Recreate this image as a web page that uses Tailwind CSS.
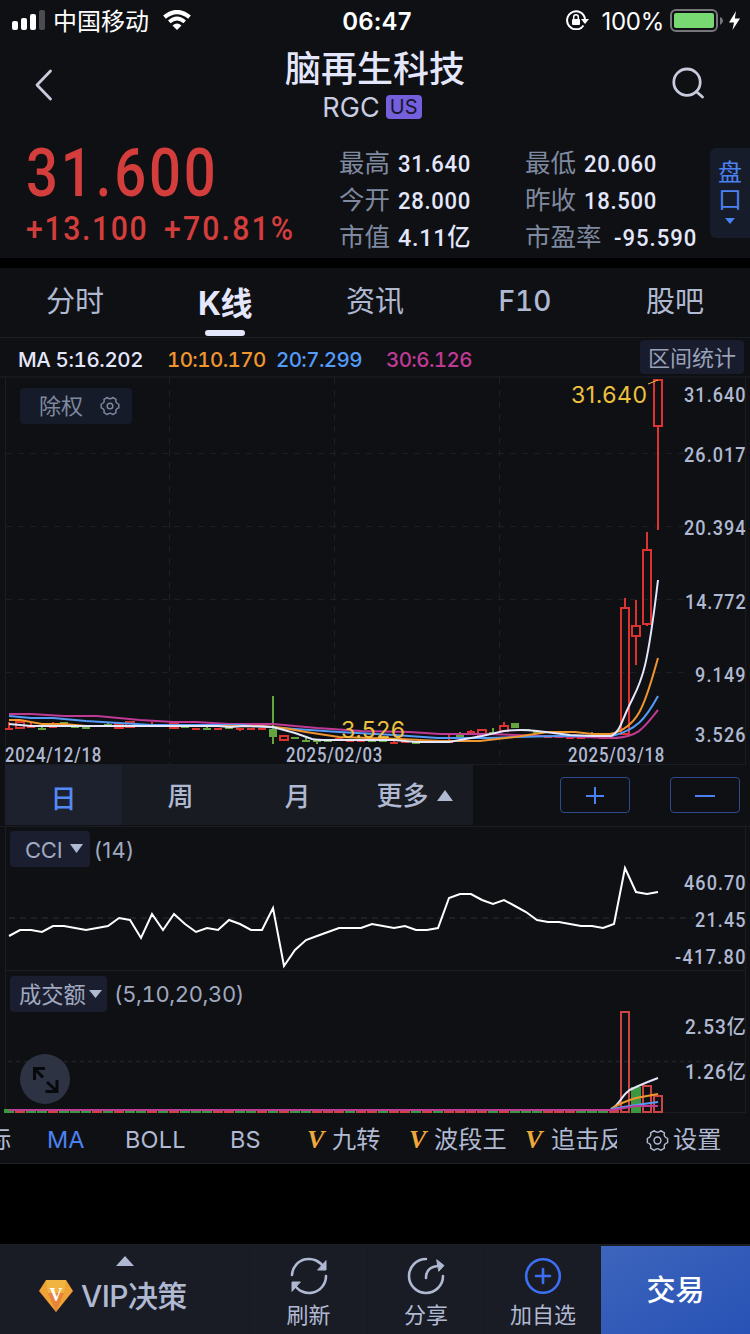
<!DOCTYPE html>
<html lang="zh-CN">
<head>
  <meta charset="UTF-8" />
  <meta name="viewport" content="width=device-width, initial-scale=1.0" />
  <title>脑再生科技 RGC</title>
  <script src="https://cdn.jsdelivr.net/npm/@tailwindcss/browser@4"></script>
</head>
<body class="w-[750px] h-[1334px] overflow-hidden bg-black text-[#b0b9d2] [font-family:Inter,'Noto_Sans_CJK_SC',sans-serif] leading-none whitespace-nowrap">
  <!-- Status bar -->
  <div class="h-10 bg-[#0f1014] grid grid-cols-3 items-center pl-3 pr-2 text-white text-2xl leading-10">
    <div class="flex items-center">
      <svg class="w-[34px] h-5 mr-[7px]" viewBox="0 0 34 20">
        <rect x="0" y="11" width="6" height="9" rx="2" fill="#fff" />
        <rect x="9" y="8" width="6" height="12" rx="2" fill="#fff" />
        <rect x="18" y="4" width="6" height="16" rx="2" fill="#fff" />
        <rect x="27" y="0" width="6" height="20" rx="2" fill="#4c4c50" />
      </svg>
      <span class="pt-[2px] leading-[37px]">中国移动</span>
      <svg class="w-7 h-5 ml-[14px]" viewBox="0 0 28 20">
        <path d="M1.500 7.200Q14-3.200 26.500 7.200" fill="none" stroke="#fff" stroke-width="4.200" />
        <path d="M6.300 11.800Q14 5 21.700 11.800" fill="none" stroke="#fff" stroke-width="3.800" />
        <path d="M9.500 15.500Q14 11.600 18.500 15.500L14 20Z" fill="#fff" />
      </svg>
    </div>
    <div class="text-center font-semibold tracking-[0.2px] pt-[2px] leading-[37px]">06:47</div>
    <div class="flex items-center justify-end">
      <svg class="w-6 h-5 mr-3" viewBox="0 0 24 20">
        <path d="M17.500 15.500A9 9 0 1 1 19 9" fill="none" stroke="#fff" stroke-width="2" />
        <path d="M15 9H23L19 14Z" fill="#fff" />
        <rect x="6" y="9" width="8" height="6" rx="1" fill="#fff" />
        <path d="M7.700 9V7A2.300 2.300 0 0 1 12.300 7V9" fill="none" stroke="#fff" stroke-width="1.500" />
      </svg>
      <span class="tracking-[-0.3px] pt-[2px] leading-[37px]">100%</span>
      <svg class="w-[72px] h-6 ml-[6px] mt-px" viewBox="0 0 72 24">
        <rect x="1" y="1" width="46" height="21" rx="5" fill="none" stroke="#77777b" stroke-width="2" />
        <rect x="4" y="4" width="40" height="15" rx="2" fill="#78d872" />
        <path d="M50 8Q53 9 53 12Q53 14 50 16Z" fill="#77777b" />
        <path d="M66 2L59 13.500H64L62.500 21L70 9.500H64.800Z" fill="#fff" />
      </svg>
    </div>
  </div>

  <!-- Title -->
  <header class="h-[90px] bg-[#0f1014] flex justify-between pl-[34px] pr-[44px]">
    <svg class="w-[38px] h-8 mt-[29px]" viewBox="0 0 38 32"><path d="M16.500 2L3 16L16.500 30" fill="none" stroke="#c8cbdd" stroke-width="2.800" stroke-linecap="round" stroke-linejoin="round" /></svg>
    <div class="ml-2 text-center text-[#e4e7fb]">
      <h1 class="text-4xl font-medium leading-[50px] mt-1">脑再生科技</h1>
      <div class="flex justify-center items-center gap-[6px] h-[26px] -ml-[6px] text-[#c9cde2]">
        <span class="text-[27px]">RGC</span>
        <span class="w-9 h-6 rounded-sm bg-[#7460dd] text-[#17172c] text-[20px] leading-6">US</span>
      </div>
    </div>
    <svg class="w-9 h-9 mt-[26px]" viewBox="0 0 36 36"><g fill="none" stroke="#c8cbdd" stroke-width="2.800" stroke-linecap="round"><circle cx="17" cy="16.200" r="13.200" /><path d="M26.500 25.700L32.500 31" /></g></svg>
  </header>

  <!-- Quote -->
  <section class="h-32 bg-[#0f1014] flex [font-family:Roboto,'Noto_Sans_CJK_SC',sans-serif]">
    <div class="w-[339px] pl-[26px] text-[#d33e3c] font-medium">
      <div class="h-[80px] leading-[86px] text-[67px] tracking-[3.4px] origin-left scale-x-[0.84]">31.600</div>
      <div class="h-10 leading-9 text-[34px] flex gap-[16px]">
        <span class="w-[122px] tracking-[1.8px] origin-left scale-x-[0.89]">+13.100</span>
        <span class="tracking-[2.4px] origin-left scale-x-[0.89]">+70.81%</span>
      </div>
    </div>
    <div class="w-[186px] pt-[15px] text-[25.500px] leading-[37px] text-[#7f899f]">
      <div class="flex gap-2"><span>最高</span><b class="text-[24.500px] font-medium tracking-[0.8px] origin-left scale-x-[0.9] text-[#e4e7fb]">31.640</b></div>
      <div class="flex gap-2"><span>今开</span><b class="text-[24.500px] font-medium tracking-[0.8px] origin-left scale-x-[0.9] text-[#e4e7fb]">28.000</b></div>
      <div class="flex gap-2"><span>市值</span><b class="text-[24.500px] font-medium tracking-[0.8px] origin-left scale-x-[0.95] text-[#e4e7fb]">4.11亿</b></div>
    </div>
    <div class="w-[185px] pt-[15px] text-[25.500px] leading-[37px] text-[#7f899f]">
      <div class="flex gap-2"><span>最低</span><b class="text-[24.500px] font-medium tracking-[0.8px] origin-left scale-x-[0.9] text-[#e4e7fb]">20.060</b></div>
      <div class="flex gap-2"><span>昨收</span><b class="text-[24.500px] font-medium tracking-[0.8px] origin-left scale-x-[0.9] text-[#e4e7fb]">18.500</b></div>
      <div class="flex gap-3"><span>市盈率</span><b class="text-[24.500px] font-medium tracking-[1.1px] origin-left scale-x-[0.9] text-[#e4e7fb]">-95.590</b></div>
    </div>
    <div class="w-10 h-[90px] mt-[18px] pt-3 rounded-l-md bg-[#161c29] text-[#4b82f2] text-2xl leading-[27px] flex flex-col items-center">
      <span>盘</span><span>口</span>
      <svg class="w-[10px] h-[6px] mt-1" viewBox="0 0 10 6"><path d="M0 0H10L5 6Z" fill="#4b82f2" /></svg>
    </div>
  </section>

  <!-- Tabs -->
  <nav class="mt-[10px] h-[70px] bg-[#0f1014] border-b border-[#1a1d22] grid grid-cols-5 text-center text-[29px] leading-[68px]">
    <span>分时</span>
    <span class="relative text-[32px] leading-[71px] font-bold tracking-[-0.5px] text-[#e4e7fb]">K线<i class="absolute left-[55px] top-[62px] w-10 h-[6px] rounded-full bg-[#e4e7fb]"></i></span>
    <span>资讯</span>
    <span class="font-medium text-[28px] leading-[67px] tabular-nums">F10</span>
    <span>股吧</span>
  </nav>

  <!-- Moving averages -->
  <div class="h-10 bg-[#0f1014] border-b-2 border-[#15181c] flex items-center pl-[18px] pr-[6px] text-[20.500px] font-medium tabular-nums tracking-[-0.6px] leading-[38px]">
    <span class="w-[149px] pt-[5px] tracking-[-0.4px] text-[#e4e7fb]">MA 5:16.202</span>
    <span class="w-[109px] pt-[5px] text-[#f0962f]">10:10.170</span>
    <span class="w-[110px] pt-[5px] text-[#549bf7]">20:7.299</span>
    <span class="pt-[5px] text-[#bf3a94]">30:6.126</span>
    <button class="ml-auto w-[104px] h-[34px] rounded bg-[#181c2c] pt-0.5 text-[22px] leading-8 font-normal tracking-normal text-[#98a2b9]">区间统计</button>
  </div>

  <!-- Candles -->
  <section class="relative h-[387px] bg-[#0f1014]">
    <svg class="block w-[750px] h-[387px] overflow-visible" viewBox="0 378 750 387">
      <g fill="none" stroke="#1c2024" stroke-dasharray="6 6">
        <path d="M6 453.500H684M6 526.500H684M6 599.500H684M6 672.500H684M169.500 378V765M334.500 378V765M499.500 378V765" />
      </g>
      <path d="M5.500 378V765M745.500 378V765M5 764.500H746" stroke="#1a1d21" fill="none" />
      <g id="candles" stroke-width="2"></g>
      <g fill="none" stroke-width="2">
        <path stroke="#bf3a94" d="M9 714H31L64 716H97L140 720L173 722H196L229 724H273L317 728L361 731L410 732L440 734H490L540 736L580 737L614 738C640 737 645 726 658 710" />
        <path stroke="#549bf7" d="M9 716L31 718H53L86 721L119 723L152 725H240L295 729L339 732L394 735L438 738H490L515 737L560 736H612C636 730 645 720 658 696" />
        <path stroke="#f0962f" d="M9 720H20L42 724H64L86 726H262L284 728L306 732L339 737L400 739L440 741H480L515 737L548 732H575L592 734H610C640 728 646 700 658 658" />
        <path stroke="#e4e7fb" d="M9 724L31 726H218L230 727L245 726L273 727L295 733L312 739Q317 740 328 740H394L416 742H449L482 736L504 731Q520 729 537 731L570 735L592 736H611C618 733 620 727 625 715C640 680 645 690 658 580" />
      </g>
      <text x="341" y="738" textLength="64" font-size="23" fill="#edc03e">3.526</text>
      <text x="571" y="403" textLength="76" font-size="23" fill="#edc03e">31.640</text>
      <path d="M648 384L658 380" stroke="#edc03e" />
      <g class="[font-family:Roboto,sans-serif]" font-size="20.500" font-weight="500" fill="#b0b9d2">
        <text transform="translate(684 402) scale(.88 1)" textLength="70">31.640</text>
        <text transform="translate(684 462) scale(.88 1)" textLength="70">26.017</text>
        <text transform="translate(684 535) scale(.88 1)" textLength="70">20.394</text>
        <text transform="translate(685 609) scale(.88 1)" textLength="69">14.772</text>
        <text transform="translate(695 682) scale(.88 1)" textLength="57.500">9.149</text>
        <text transform="translate(695 742) scale(.88 1)" textLength="57.500">3.526</text>
        <g font-size="19.500">
          <text transform="translate(5 762) scale(.86 1)" textLength="112">2024/12/18</text>
          <text transform="translate(286 762) scale(.86 1)" textLength="112">2025/02/03</text>
          <text transform="translate(568 762) scale(.86 1)" textLength="112">2025/03/18</text>
        </g>
      </g>
    </svg>
    <button class="absolute left-5 top-[10px] w-28 h-9 rounded bg-[#151b28] pl-[19px] flex items-center gap-[17px] text-[22px] text-[#7f899f]">除权
      <svg class="w-5 h-5" viewBox="0 0 24 24" fill="none" stroke="#7f899f" stroke-width="1.700" stroke-linejoin="round"><path d="M22.560 9.750V14.250Q18 15.500 19.230 20.030L15.340 22.270Q12 19 8.660 22.270L4.770 20.030Q6 15.500 1.440 14.250V9.750Q6 8.500 4.770 3.970L8.660 1.730Q12 5 15.340 1.730L19.230 3.970Q18 8.500 22.560 9.750Z" /><circle cx="12" cy="12" r="3.400" /></svg>
    </button>
  </section>

  <!-- Period -->
  <div class="h-[62px] bg-[#0f1014] border-b border-[#1a1d21] flex items-start pl-[5px]">
    <div class="w-[468px] h-[60px] bg-[#181b22] grid grid-cols-4 text-center text-[26px] font-medium leading-[63px]">
      <span class="bg-[#1d212d] h-[60px] text-[#548af7] leading-[67px]">日</span>
      <span>周</span>
      <span>月</span>
      <span class="h-[60px] pt-px flex justify-center items-center gap-2">更多<svg class="w-4 h-[11px]" viewBox="0 0 16 11"><path d="M8 0L16 11H0Z" fill="#b0b9d2" /></svg></span>
    </div>
    <button class="ml-[87px] mt-3 w-[70px] h-9 rounded border border-[#2c4a8c] flex justify-center items-center"><svg class="w-[18px] h-[18px]" viewBox="0 0 18 18"><path d="M0 10H18M9 1V18" stroke="#4b82f2" stroke-width="2" /></svg></button>
    <button class="ml-10 mt-3 w-[70px] h-9 rounded border border-[#2c4a8c] flex justify-center items-center"><svg class="w-5 h-[18px]" viewBox="0 0 20 18"><path d="M0 10H20" stroke="#4b82f2" stroke-width="2" /></svg></button>
  </div>

  <!-- CCI -->
  <section class="relative h-[143px] bg-[#0f1014]">
    <svg class="block w-[750px] h-[143px]" viewBox="0 827 750 143">
      <path d="M9 918H694" stroke="#22262b" stroke-width="1.500" stroke-dasharray="6 5" />
      <path d="M5.500 827V970M745.500 827V970" stroke="#1a1d21" />
      <polyline id="cci" fill="none" stroke="#fff" stroke-width="2" />
      <g class="[font-family:Roboto,sans-serif]" font-size="20.500" font-weight="500" fill="#b0b9d2">
        <text transform="translate(684 890) scale(.88 1)" textLength="70">460.70</text>
        <text transform="translate(695 927) scale(.88 1)" textLength="57.500">21.45</text>
        <text transform="translate(675 964) scale(.88 1)" textLength="80">-417.80</text>
      </g>
    </svg>
    <div class="absolute left-[10px] top-1 h-9 flex items-center gap-1 text-[22px] leading-[34px] text-[#a0a9c0]">
      <span class="w-20 h-9 rounded bg-[#1a1e2f] flex items-center pt-0.5 pl-[15px] gap-2 tracking-[-0.2px]">CCI<svg class="w-[13px] h-[9px] -mt-1" viewBox="0 0 13 9"><path d="M0 0H13L6.500 9Z" fill="#b0b9d2" /></svg></span>
      <span class="pt-0.5 tracking-[0.3px]">(14)</span>
    </div>
  </section>

  <!-- Turnover -->
  <section class="relative h-[143px] bg-[#0f1014]">
    <svg class="block w-[750px] h-[143px]" viewBox="0 970 750 143">
      <path d="M5 970.500H746M5.500 970V1113M745.500 970V1113M5 1112.500H746" stroke="#1a1d21" />
      <path d="M8 1061.500H745" stroke="#1e2226" stroke-width="1.500" stroke-dasharray="4 4" />
      <g id="volume" stroke-width="2"></g>
      <g fill="none" stroke-width="2">
        <path stroke="#e4e7fb" d="M611 1109C622 1104 620 1093 636 1087Q647 1082 658 1078" />
        <path stroke="#f0962f" d="M611 1109Q622 1102 636 1098Q647 1096 658 1094" />
        <path stroke="#549bf7" d="M611 1109L636 1105L658 1102" />
        <path stroke="#bf3a94" d="M9 1110H612L636 1106H658" />
      </g>
      <g class="[font-family:Roboto,'Noto_Sans_CJK_SC',sans-serif]" font-size="20.500" font-weight="500" fill="#b0b9d2">
        <text transform="translate(685 1034) scale(.93 1)" textLength="65.500">2.53亿</text>
        <text transform="translate(685 1079) scale(.93 1)" textLength="65.500">1.26亿</text>
      </g>
    </svg>
    <div class="absolute left-[10px] top-[6px] h-9 flex items-center gap-[7px] text-[22px] leading-[34px] text-[#a0a9c0]">
      <span class="w-[97px] h-9 rounded bg-[#1a1e2f] flex items-center pt-0.5 pl-[9px] gap-[3px] text-[22.300px]">成交额<svg class="w-[13px] h-[8px] -mt-0.5" viewBox="0 0 13 8"><path d="M0 0H13L6.500 8Z" fill="#b0b9d2" /></svg></span>
      <span class="tabular-nums tracking-[-0.4px]">(5,10,20,30)</span>
    </div>
    <button class="absolute left-5 top-[84px] w-[50px] h-[50px] rounded-full bg-[#2d3342]">
      <svg class="w-[50px] h-[50px]" viewBox="0 0 50 50" fill="none" stroke="#08090c" stroke-width="3"><path d="M25 14.500H14.500V26M14.500 14.500L23 23.500M27 28L36.500 37M25.500 37.500H37V26" /></svg>
    </button>
  </section>

  <!-- Indicators -->
  <div class="h-[51px] bg-[#0f1014] border-b border-[#1e2126] flex items-center text-[24.200px] pt-1">
    <div class="w-[617px] flex items-center overflow-hidden leading-[36px]">
      <span class="-ml-[13px] w-[60px] shrink-0">标</span>
      <span class="w-[78px] shrink-0 text-[#4b82f2] text-[23.500px]">MA</span>
      <span class="w-[105px] shrink-0 text-[23.500px] tracking-[0.2px]">BOLL</span>
      <span class="w-[77px] shrink-0 text-[23.500px]">BS</span>
      <span class="w-[25px] shrink-0 text-[#eea83c] text-[26px] font-bold italic [font-family:'Liberation_Serif',serif]">V</span><span class="w-[77px] shrink-0">九转</span>
      <span class="w-[25px] shrink-0 text-[#eea83c] text-[26px] font-bold italic [font-family:'Liberation_Serif',serif]">V</span><span class="w-[91px] shrink-0">波段王</span>
      <span class="w-[26px] shrink-0 text-[#eea83c] text-[26px] font-bold italic [font-family:'Liberation_Serif',serif]">V</span><span class="shrink-0">追击反</span>
    </div>
    <svg class="w-[23px] h-[23px] ml-[29px] mr-1" viewBox="0 0 24 24" fill="none" stroke="#b0b9d2" stroke-width="1.500" stroke-linejoin="round"><path d="M22.560 9.750V14.250Q18 15.500 19.230 20.030L15.340 22.270Q12 19 8.660 22.270L4.770 20.030Q6 15.500 1.440 14.250V9.750Q6 8.500 4.770 3.970L8.660 1.730Q12 5 15.340 1.730L19.230 3.970Q18 8.500 22.560 9.750Z" /><circle cx="12" cy="12" r="3.600" /></svg>
    <span class="leading-[36px]">设置</span>
  </div>

  <!-- Bottom bar -->
  <footer class="mt-20 h-[90px] bg-[#1a1c25] border-t border-[#1d1f24] flex">
    <div class="w-[250px] border-r border-[#171921] flex flex-col items-center">
      <svg class="w-[18px] h-[10px] mt-[11px]" viewBox="0 0 18 10"><path d="M9 0L18 10H0Z" fill="#b0b9d2" /></svg>
      <div class="flex items-center w-full pl-[38px] gap-[7px] mt-[10px] text-[30px] leading-10">
        <svg class="w-9 h-8" viewBox="0 0 36 32">
          <path d="M8 0H28L35 11L18 32L1 11Z" fill="#efa235" />
          <path d="M8 0H28L26 13H10Z" fill="#f2b440" />
          <path d="M10 13L18 32L26 13Z" fill="#e8843a" />
          <text x="18" y="21" text-anchor="middle" font-family="Liberation Serif" font-weight="bold" font-size="18" fill="#fff">V</text>
        </svg>
        <span class="font-medium tracking-[-0.6px]">VIP决策</span>
      </div>
    </div>
    <div class="w-[118px] border-r border-[#171921] flex flex-col items-center pt-[11px] gap-2 text-[22px]">
      <svg class="w-10 h-10" viewBox="0 0 40 40" fill="none" stroke="#b0b9d2" stroke-width="2.600" stroke-linecap="round"><path d="M3 19A17 17 0 0 1 35 12" /><path d="M37 20A17 17 0 0 1 5 28" /><path d="M37 5V14H29ZM3 35V26H11Z" fill="#b0b9d2" stroke-width="1" /></svg>
      刷新
    </div>
    <div class="w-[117px] border-r border-[#171921] flex flex-col items-center pt-[11px] gap-2 text-[22px]">
      <svg class="w-10 h-10" viewBox="0 0 40 40" fill="none" stroke="#b0b9d2" stroke-width="2.600" stroke-linecap="round"><path d="M20 3A17 17 0 1 0 37 20" /><path d="M20 22Q20 11 32 10" /><path d="M31 4L38 9.500L33 15Z" fill="#b0b9d2" stroke-width="1" /></svg>
      分享
    </div>
    <div class="w-[116px] flex flex-col items-center pt-[11px] gap-2 text-[22px]">
      <svg class="w-10 h-10" viewBox="0 0 40 40" fill="none" stroke="#3d6ff5" stroke-width="2.600" stroke-linecap="round"><circle cx="20" cy="20" r="16.800" /><path d="M13 20H27M20 13V27" /></svg>
      加自选
    </div>
    <button class="mt-px w-[149px] h-[88px] bg-linear-to-br from-[#3d65bd] to-[#2852b5] text-white text-[29px] font-medium">交易</button>
  </footer>

  <script>
    const UP = '#dc3330', DOWN = '#64a53d'
    // [direction, body top, body bottom, wick top, wick bottom]
    const candles = [
      ['r',728,730,722,729],['r',722,728,722,728],['r',726,728,722,727],['g',728,730,727,729],['r',726,728,722,727],['g',722,725,722,725],
      ['g',725,728,725,728],['g',727,728,727,728],['r',725,727,725,727],['g',724,727,722,727],['r',724,728,724,728],['r',722,727,722,727],
      ['g',725,727,725,727],['r',724,727,722,727],['r',724,727,724,727],['r',723,728,723,728],['g',726,728,724,728],['r',728,730,728,730],
      ['g',728,730,727,730],['r',728,730,728,730],['g',727,728,727,728],['r',728,730,728,731],['r',728,730,728,730],['r',728,730,728,730],
      ['g',729,737,696,744],['r',736,740,736,740],['g',737,739,737,739],['g',740,742,738,742],['g',740,742,740,744],['g',740,741,740,741],
      ['r',738,740,738,740],['r',740,742,740,742],['r',740,742,740,742],['g',740,741,740,741],['g',740,741,740,741],['r',742,743,741,743],
      ['r',741,742,741,742],['g',742,743,742,744],['g',741,742,741,742],['g',741,742,741,742],['r',741,742,735,742],['g',735,737,732,737],
      ['r',731,733,730,733],['r',730,735,730,735],['g',732,733,728,733],['r',726,731,722,731],['g',723,728,723,728],['g',729,730,729,730],
      ['g',731,733,731,733],['r',736,737,736,737],['r',736,737,736,737],['r',737,738,737,738],['r',737,738,737,738],['g',735,736,732,736],
      ['r',737,738,737,738],['g',737,738,737,738],['r',608,734,598,734],['r',626,636,600,665],['r',550,624,532,626],['r',380,426,380,530]
    ]
    const volumeColors = 'grggrgggrgrggrgrgggrrggrgrggrrrgrrgrrgrgrrrrgrgggrrrgggr'
    const cci = [936,930,930,932,926,926,928,930,928,926,918,920,938,914,930,914,924,932,928,930,920,924,930,930,908,966,950,940,936,932,
      928,928,928,924,926,928,926,930,930,928,898,894,894,900,904,900,906,912,920,922,922,924,926,926,928,924,868,892,894,892]
    const x = i => 9 + i * 11

    document.getElementById('candles').innerHTML = candles.map(([d, t, b, wt, wb], i) => {
      const c = d === 'r' ? UP : DOWN
      const hollow = d === 'r' && b - t > 3
      return `<path d="M${x(i)} ${wt}V${t}M${x(i)} ${b}V${Math.max(b, wb)}" stroke="${c}"/>` +
        (hollow ? `<rect x="${x(i) - 4}" y="${t}" width="8" height="${b - t}" fill="none" stroke="${c}"/>`
                : `<rect x="${x(i) - 4}" y="${t}" width="8" height="${Math.max(b - t, 2)}" fill="${c}"/>`)
    }).join('')

    document.getElementById('cci').setAttribute('points', cci.map((y, i) => x(i) + ',' + y).join(' '))

    document.getElementById('volume').innerHTML = [...volumeColors].map((d, i) =>
      `<rect x="${x(i) - 5}" y="1109" width="10" height="4" fill="${d === 'r' ? '#cb4544' : '#3d9640'}"/>`).join('') +
      '<rect x="621" y="1012" width="8" height="100" fill="none" stroke="#cb4544"/>' +
      '<rect x="631" y="1087" width="10" height="26" fill="#3d9640"/>' +
      '<rect x="643" y="1086" width="8" height="26" fill="none" stroke="#cb4544"/>' +
      '<rect x="654" y="1096" width="8" height="16" fill="none" stroke="#cb4544"/>'
  </script>
</body>
</html>
